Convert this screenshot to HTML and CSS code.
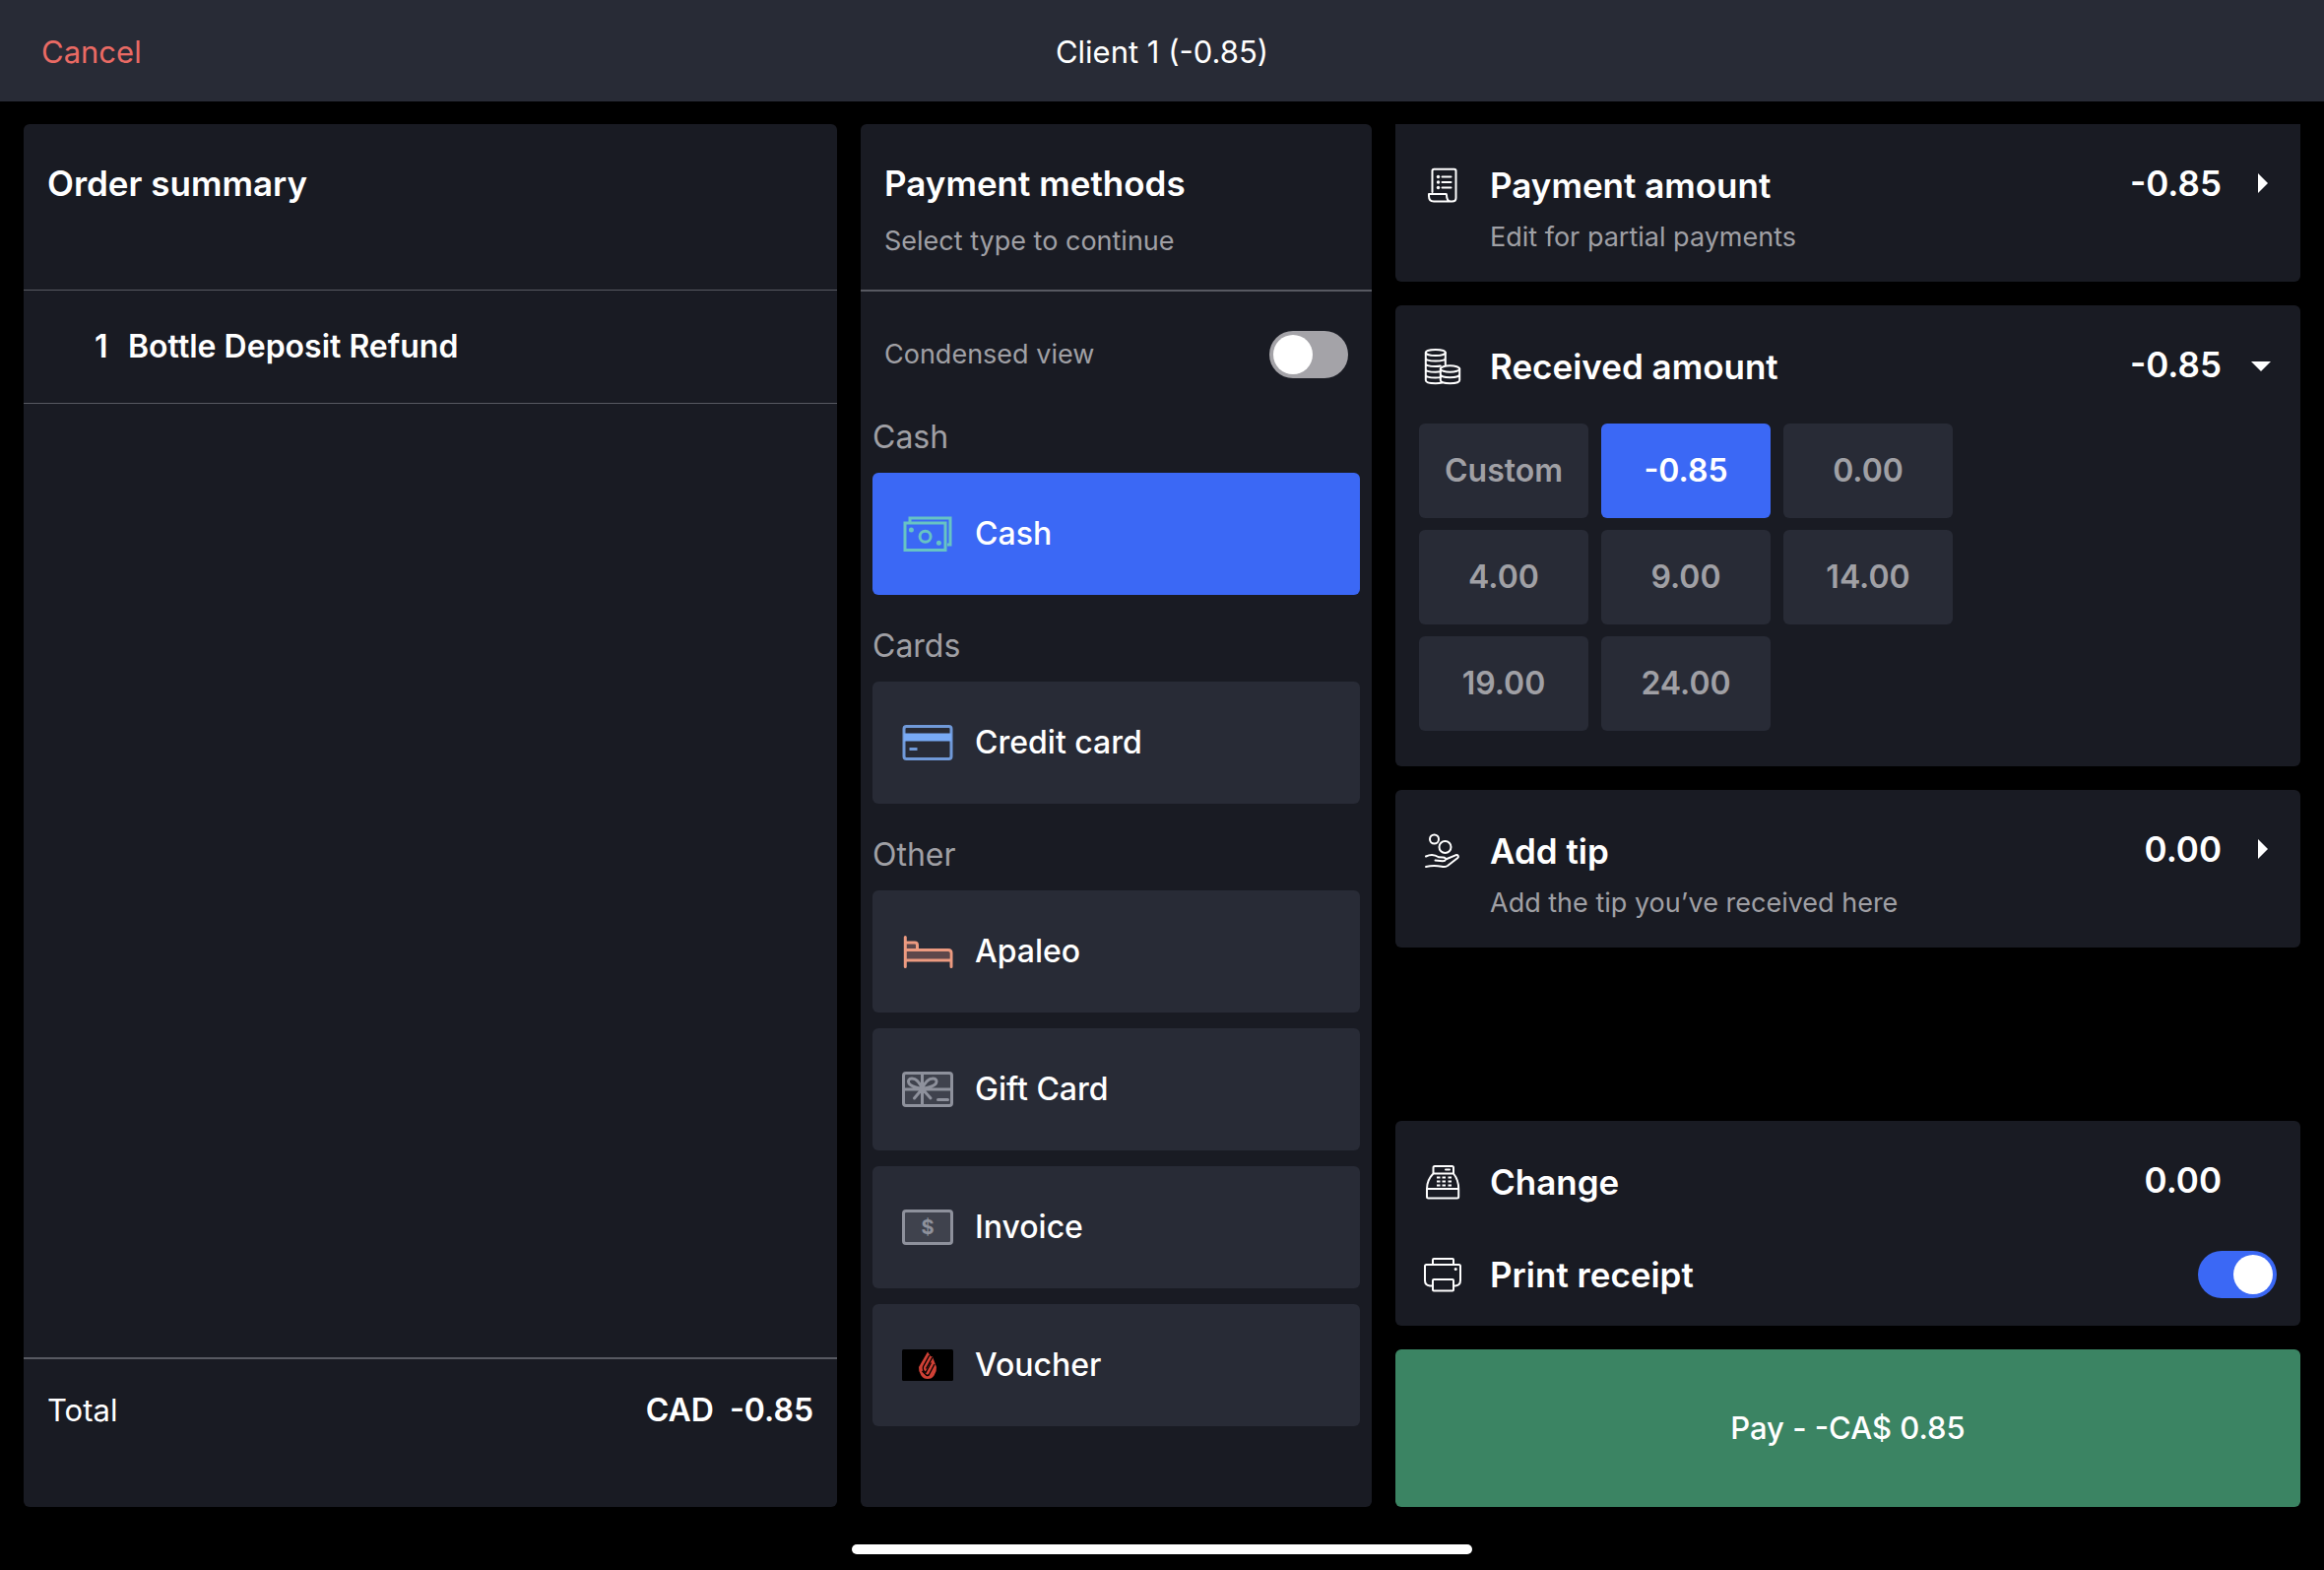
FILE: index.html
```html
<!DOCTYPE html>
<html lang="en">
<head>
<meta charset="utf-8">
<meta name="viewport" content="width=device-width, initial-scale=1">
<title>Payment</title>
<link rel="stylesheet" href="styles.css">
</head>
<body>
<header class="topbar">
  <button type="button" class="cancel">Cancel</button>
  <h1 class="topbar-title">Client 1 (-0.85)</h1>
</header>

<main class="columns">
  <section class="panel order">
    <div class="panel-head">
      <h2 class="title">Order summary</h2>
    </div>
    <ul class="order-items">
      <li class="order-item"><span class="quantity">1</span><span>Bottle Deposit Refund</span></li>
    </ul>
    <div class="order-total">
      <span class="total-label">Total</span>
      <span class="total-value"><span>CAD</span><span>-0.85</span></span>
    </div>
  </section>

  <section class="panel methods">
    <div class="panel-head ruled">
      <h2 class="title">Payment methods</h2>
      <p class="hint">Select type to continue</p>
    </div>
    <div class="condensed">
      <label class="hint" for="condensed">Condensed view</label>
      <input class="switch" type="checkbox" id="condensed">
    </div>

    <div class="group">
      <h3 class="group-label">Cash</h3>
      <button type="button" class="method selected">
        <svg class="method-icon cash" viewBox="0 0 52 36" aria-hidden="true">
          <path d="M8 6V2h41v27H46M3 7h41v27.500H3z"/>
          <circle cx="23.600" cy="20.700" r="5.500"/>
          <circle class="solid" cx="9.400" cy="14" r="2.500"/>
          <circle class="solid" cx="37.400" cy="27.200" r="2.500"/>
        </svg>
        <span>Cash</span>
      </button>
    </div>

    <div class="group">
      <h3 class="group-label">Cards</h3>
      <button type="button" class="method">
        <svg class="method-icon card-icon" viewBox="0 0 52 36" aria-hidden="true">
          <rect x="2" y="1.500" width="48" height="33" rx="2.500"/>
          <path class="solid" d="M2 8.500h48v8H2z"/>
          <path d="M7.500 24.500h8"/>
        </svg>
        <span>Credit card</span>
      </button>
    </div>

    <div class="group">
      <h3 class="group-label">Other</h3>
      <button type="button" class="method">
        <svg class="method-icon bed" viewBox="0 0 52 36" aria-hidden="true">
          <path class="tint" d="M3 16.500h45v10H3zM3 9h12v7H3z"/>
          <path d="M3.300 3.500v30M3.300 9h9.700q2.500 0 2.500 2.500v5M3.300 16.500H47q3 0 3 3v14M3.300 27H50"/>
        </svg>
        <span>Apaleo</span>
      </button>
      <button type="button" class="method">
        <svg class="method-icon muted" viewBox="0 0 52 36" aria-hidden="true">
          <rect class="tint" x="1.500" y="1.500" width="49" height="33" rx="2.500"/>
          <path d="M20.500 1.500v33M1.500 18h49M20.500 17.500C18 11 14 7 10 7c-3 0-4.500 2.500-3 5 2 3.500 8 4 13.500 5.500C23 11 27 7 31.500 7c3 0 4.500 2.500 3 5-2 3.500-8 4-14 5.500L12.500 27M20.500 17.500L29 27M36.500 28.500h10"/>
        </svg>
        <span>Gift Card</span>
      </button>
      <button type="button" class="method">
        <svg class="method-icon muted" viewBox="0 0 52 36" aria-hidden="true">
          <rect class="tint" x="1.500" y="1.500" width="49" height="33" rx="2.500"/>
          <text class="currency" x="26" y="25" text-anchor="middle">$</text>
        </svg>
        <span>Invoice</span>
      </button>
      <button type="button" class="method">
        <svg class="method-icon" viewBox="0 0 52 36" aria-hidden="true">
          <rect x="0" y="2" width="52" height="32" rx="1.500" fill="#000"/>
          <path fill="#cf4035" d="M26 4.500l3 4.500 2 .5 1.500 4 2.500 6.500q.5 4-2.400 8.500-2.300 3.500-6.600 3.500t-6.600-3.500Q16.500 24 17 20z"/>
          <path fill="none" stroke="#000" stroke-width="1.300" d="M27.800 8l-6.300 11.500q-1 4 2.500 6l5.500-10"/>
          <path fill="none" stroke="#000" stroke-width="1.300" d="M31 10l-6.500 11.500M33 17l-5.500 10.500q-1.500 2-3.500 0L20.500 24"/>
        </svg>
        <span>Voucher</span>
      </button>
    </div>
  </section>

  <div class="details">
    <section class="panel card flush">
      <button type="button" class="row">
        <svg class="row-icon" viewBox="0 0 40 40" aria-hidden="true">
          <path d="M9.500 27V5.500q0-1.700 1.700-1.700h20.600q1.700 0 1.700 1.700V33q0 3.500-4 3.500H11q-5 0-5-5.500v-2h17.500q.5 0 .5 1 0 6.500 4.500 6.500"/>
          <path d="M19.500 11.500h9M19.500 17h9M19.500 22.500h9"/>
          <g class="solid"><circle cx="15.500" cy="11.500" r="1.700"/><circle cx="15.500" cy="17" r="1.700"/><circle cx="15.500" cy="22.500" r="1.700"/></g>
        </svg>
        <span class="title">Payment amount</span>
        <span class="value">-0.85</span>
        <svg class="arrow" viewBox="0 0 32 40" aria-hidden="true"><path d="M13 10l10 10-10 10z"/></svg>
      </button>
      <p class="hint">Edit for partial payments</p>
    </section>

    <section class="panel card received">
      <button type="button" class="row" aria-expanded="true">
        <svg class="row-icon" viewBox="0 0 40 40" aria-hidden="true">
          <ellipse cx="12.800" cy="6" rx="10" ry="3"/>
          <path d="M2.800 6v28c0 2 4.500 3.200 10 3.200 2.500 0 5-.2 6.500-.7M22.800 6v12.500M2.800 11.500c0 2 4.500 3 10 3s10-1 10-3M2.800 17c0 2 4.500 3 10 3 2 0 3.500 0 5-.5M2.800 22.700c0 2 4.500 3 10 3 1.800 0 3.300 0 5-.4M2.800 28.500c0 2 4.500 3 10 3 1.800 0 3.300 0 5-.4"/>
          <ellipse cx="27.500" cy="22.500" rx="9.700" ry="3.200"/>
          <path d="M17.800 22.500V34c0 2 4.500 3.200 9.700 3.200s9.700-1.200 9.700-3.200V22.500M17.800 28c0 2 4.500 3.200 9.700 3.200s9.700-1.200 9.700-3.200"/>
        </svg>
        <span class="title">Received amount</span>
        <span class="value">-0.85</span>
        <svg class="arrow" viewBox="0 0 32 40" aria-hidden="true"><path d="M6 17h20L16 27z"/></svg>
      </button>
      <div class="amounts">
        <button type="button" class="amount">Custom</button>
        <button type="button" class="amount selected">-0.85</button>
        <button type="button" class="amount">0.00</button>
        <button type="button" class="amount">4.00</button>
        <button type="button" class="amount">9.00</button>
        <button type="button" class="amount">14.00</button>
        <button type="button" class="amount">19.00</button>
        <button type="button" class="amount">24.00</button>
      </div>
    </section>

    <section class="panel card">
      <button type="button" class="row">
        <svg class="row-icon" viewBox="0 0 40 40" aria-hidden="true">
          <circle cx="11.500" cy="8" r="4.500"/>
          <circle cx="22.500" cy="16" r="6"/>
          <path d="M3 25.500c5-2.500 9-2 13 .8l4.500.2q3 .3 2.500 2.300-.5 1.500-3 1.500l-7.500-.8M23 28.500l10-4.200c2.500-.8 4 1.200 2 3L25 35c-2 1.200-4 1.200-6 .8-6-1.200-10-1.200-16 .2"/>
        </svg>
        <span class="title">Add tip</span>
        <span class="value">0.00</span>
        <svg class="arrow" viewBox="0 0 32 40" aria-hidden="true"><path d="M13 10l10 10-10 10z"/></svg>
      </button>
      <p class="hint">Add the tip you’ve received here</p>
    </section>

    <section class="panel card checkout">
      <div class="row">
        <svg class="row-icon" viewBox="0 0 40 40" aria-hidden="true">
          <path d="M10.500 11.500V5.500q0-1.500 1.500-1.500h17.500q1.500 0 1.500 1.500v6M10.500 11.500H31Q36.200 18 36.200 27v8q0 1.500-1.500 1.500H5.500Q4 36.500 4 35v-8q0-9 6.500-15.500zM4 27h32.200M23 7.500h4"/>
          <path class="keys" d="M14 15.500h3.500M19.500 15.500h3.500M25.500 15.500h3.500M14 19.500h3.500M19.500 19.500h3.500M25.500 19.500h3.500M14 23.500h3.500M19.500 23.500h3.500M25.500 23.500h3.500"/>
        </svg>
        <span class="title">Change</span>
        <span class="value">0.00</span>
      </div>
      <div class="row print">
        <svg class="row-icon" viewBox="0 0 40 40" aria-hidden="true">
          <path d="M10 10V5q0-1 1-1h19q1 0 1 1v5M10 31.500H7q-5-.5-5-5.500V11.500Q2 10 3.500 10h33q1.500 0 1.500 1.500V26q0 5-5 5.500h-2"/>
          <rect x="10" y="25" width="21" height="11.500" rx="1"/>
          <circle class="solid" cx="33.200" cy="14.500" r="1.500"/>
        </svg>
        <label class="title" for="print">Print receipt</label>
        <input class="switch" type="checkbox" id="print" checked>
      </div>
    </section>

    <button type="button" class="pay">Pay - -CA$ 0.85</button>
  </div>
</main>

<footer class="home"><span class="home-bar"></span></footer>
</body>
</html>
```
FILE: styles.css
```css
:root {
  --surface: #191b23;
  --raised: #282b36;
  --line: #575961;
  --muted: #a0a0a5;
  --blue: #3b68f5;
  --green: #3b8463;
}

* {
  box-sizing: border-box;
}

body {
  margin: 0;
  min-height: 100vh;
  display: flex;
  flex-direction: column;
  background: #000;
  color: #fff;
  font-family: Inter, "Liberation Sans", sans-serif;
  font-size: 32px;
  line-height: 40px;
}

h1, h2, h3, p, ul {
  margin: 0;
  padding: 0;
}

button {
  border: 0;
  padding: 0;
  background: none;
  color: inherit;
  font: inherit;
  cursor: pointer;
}

.topbar {
  display: grid;
  grid-template-columns: 1fr auto 1fr;
  align-items: center;
  padding: 33px 42px 30px;
  background: var(--raised);
  font-size: 31px;
}

.cancel {
  justify-self: start;
  color: #ea6a64;
}

.topbar-title {
  font-size: 31px;
  font-weight: 400;
}

.columns {
  flex: 1;
  display: grid;
  grid-template-columns: 826fr 519fr 919fr;
  gap: 24px;
  padding: 23px 24px 0;
}

.panel {
  background: var(--surface);
  border-radius: 6px;
}

.panel-head {
  min-height: 169px;
  padding: 40px 24px 30px;
  border-bottom: 1px solid var(--line);
}

.panel-head.ruled {
  border-bottom-width: 2px;
}

.title {
  font-size: 35px;
  font-weight: 600;
}

.hint {
  color: var(--muted);
  font-size: 27px;
  line-height: 38px;
}

.panel-head .hint {
  margin-top: 20px;
}

/* Order summary */

.order {
  display: flex;
  flex-direction: column;
}

.order-items {
  flex: 1;
  list-style: none;
}

.order-item {
  display: flex;
  padding: 37px 24px 37px 72px;
  border-bottom: 1px solid var(--line);
  font-weight: 600;
}

.quantity {
  width: 34px;
}

.order-total {
  display: flex;
  justify-content: space-between;
  padding: 32px 24px 78px;
  border-top: 2px solid var(--line);
}

.total-label {
  font-size: 31px;
}

.total-value {
  display: flex;
  gap: 16px;
  font-weight: 600;
}

/* Payment methods */

.condensed {
  display: flex;
  align-items: center;
  justify-content: space-between;
  padding: 40px 24px 8px;
}

.switch {
  appearance: none;
  display: flex;
  width: 80px;
  height: 48px;
  margin: 0;
  padding: 4px;
  border-radius: 24px;
  background: #a4a3a8;
  cursor: pointer;
}

.switch::before {
  content: "";
  width: 40px;
  height: 40px;
  border-radius: 50%;
  background: #fff;
}

.switch:checked {
  justify-content: flex-end;
  background: var(--blue);
}

.group {
  display: flex;
  flex-direction: column;
  gap: 16px;
  padding: 32px 12px 0;
}

.group-label {
  color: var(--muted);
  font-size: 32px;
  font-weight: 400;
}

.method {
  display: flex;
  align-items: center;
  gap: 22px;
  padding: 42px 30px;
  border-radius: 6px;
  background: var(--raised);
  font-weight: 500;
}

.selected {
  background: var(--blue);
}

.method-icon {
  width: 52px;
  height: 36px;
  fill: none;
  stroke-width: 2;
}

.cash {
  stroke: #67c3c4;
  stroke-width: 3;
}

.cash .solid {
  fill: #67c3c4;
  stroke: none;
}

.card-icon {
  stroke: #7099d8;
  stroke-width: 3;
}

.card-icon .solid {
  fill: #78aaf6;
  stroke: none;
}

.bed {
  stroke: #ec9a80;
  stroke-width: 3;
  stroke-linecap: round;
}

.bed .tint {
  fill: #5c474b;
  stroke: none;
}

.muted {
  stroke: #8e919c;
  stroke-width: 3;
  stroke-linecap: round;
}

.muted .tint {
  fill: #3f424d;
}

.currency {
  fill: #8e919c;
  stroke: none;
  font-size: 20px;
  font-weight: 700;
}

/* Payment details */

.details {
  display: flex;
  flex-direction: column;
  gap: 24px;
}

.card {
  padding: 40px 24px 26px;
}

.flush {
  border-top-left-radius: 0;
  border-top-right-radius: 0;
}

.row {
  display: flex;
  align-items: flex-start;
  width: 100%;
  text-align: left;
}

.row-icon {
  width: 40px;
  height: 40px;
  margin: 2px 28px 2px 4px;
  fill: none;
  stroke: #fff;
  stroke-width: 2;
  stroke-linecap: round;
  stroke-linejoin: round;
}

.row-icon .solid {
  fill: #fff;
  stroke: none;
}

.row-icon .keys {
  stroke-linecap: butt;
}

.row .title {
  flex: 1;
  line-height: 44px;
}

.value {
  margin-right: 24px;
  font-size: 35px;
  font-weight: 600;
}

.value:last-child {
  margin-right: 56px;
}

.arrow {
  width: 32px;
  height: 40px;
  fill: #fff;
}

.card > .hint {
  margin: 12px 0 0 72px;
}

.received {
  padding-bottom: 36px;
}

.amounts {
  display: grid;
  grid-template-columns: repeat(3, 172px);
  gap: 12px 13px;
  margin-top: 36px;
}

.amount {
  padding: 28px 0;
  border-radius: 6px;
  background: var(--raised);
  color: var(--muted);
  font-weight: 600;
}

.amount.selected {
  background: var(--blue);
  color: #fff;
}

.checkout {
  margin-top: auto;
  padding-bottom: 28px;
}

.print {
  align-items: center;
  margin-top: 48px;
}

.pay {
  padding: 60px 24px;
  border-radius: 6px;
  background: var(--green);
  font-size: 31px;
  font-weight: 500;
}

.home {
  display: flex;
  justify-content: center;
  padding: 38px 0 16px;
}

.home-bar {
  width: 630px;
  height: 10px;
  border-radius: 5px;
  background: #fff;
}
```
